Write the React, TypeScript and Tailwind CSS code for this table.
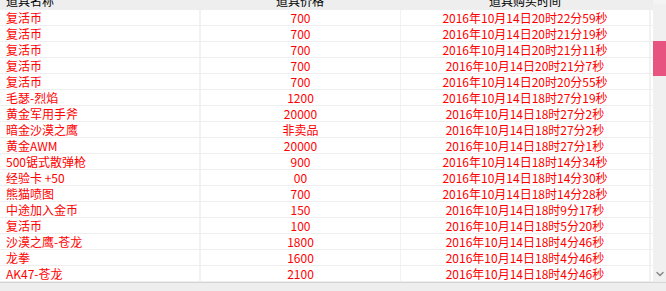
import { ChevronDown } from "lucide-react";

const ROWS: [string, string, string][] = [
  ["复活币", "700", "2016年10月14日20时22分59秒"],
  ["复活币", "700", "2016年10月14日20时21分19秒"],
  ["复活币", "700", "2016年10月14日20时21分11秒"],
  ["复活币", "700", "2016年10月14日20时21分7秒"],
  ["复活币", "700", "2016年10月14日20时20分55秒"],
  ["毛瑟-烈焰", "1200", "2016年10月14日18时27分19秒"],
  ["黄金军用手斧", "20000", "2016年10月14日18时27分2秒"],
  ["暗金沙漠之鹰", "非卖品", "2016年10月14日18时27分2秒"],
  ["黄金AWM", "20000", "2016年10月14日18时27分1秒"],
  ["500锯式散弹枪", "900", "2016年10月14日18时14分34秒"],
  ["经验卡 +50", "00", "2016年10月14日18时14分30秒"],
  ["熊猫喷图", "700", "2016年10月14日18时14分28秒"],
  ["中途加入金币", "150", "2016年10月14日18时9分17秒"],
  ["复活币", "100", "2016年10月14日18时5分20秒"],
  ["沙漠之鹰-苍龙", "1800", "2016年10月14日18时4分46秒"],
  ["龙拳", "1600", "2016年10月14日18时4分46秒"],
  ["AK47-苍龙", "2100", "2016年10月14日18时4分46秒"],
];

export default function App() {
  return (
    <div
      className="flex h-[291px] w-[666px] flex-col overflow-hidden bg-white text-[12px]"
      style={{ fontFamily: '"Noto Sans CJK SC", sans-serif' }}
    >
      <div className="flex h-[282px]">
        {/* table */}
        <div className="flex w-[653px] flex-col">
          <div className="flex h-[10px] overflow-hidden bg-[#eeeeee] pr-[1px] text-black">
            <div className="-mt-[7px] w-[200px] pl-[6px] leading-[16px]">道具名称</div>
            <div className="-mt-[7px] w-[200px] text-center leading-[16px]">道具价格</div>
            <div className="-mt-[7px] w-[250px] text-center leading-[16px]">道具购买时间</div>
          </div>
          {ROWS.map(([name, price, time], i) => (
            <div key={i} className="flex h-[16px] border-b border-[#eeeeee] text-[#ff0000]">
              <div className="w-[201px] border-r-2 border-[#f2f2f2] pl-[6px] leading-[15px]">{name}</div>
              <div className="w-[199px] text-center leading-[15px]">{price}</div>
              <div className="w-[251px] border-l border-r-2 border-[#f2f2f2] text-center leading-[15px]">
                {time}
              </div>
            </div>
          ))}
        </div>
        {/* scrollbar */}
        <div className="flex w-[13px] flex-col bg-[#f0f0f0]">
          <div className="h-[4px] bg-[#f4f4f4]" />
          <div className="mt-[37px] h-[35px] bg-[#e85480]" />
          <div className="flex-1" />
          <div className="mb-[2px] flex justify-center">
            <ChevronDown className="h-[12px] w-[12px] text-[#8a8a8a]" strokeWidth={3} />
          </div>
        </div>
      </div>
      <div className="flex-1 border-t border-[#d4d4d4] bg-[#eeeeee]" />
    </div>
  );
}
